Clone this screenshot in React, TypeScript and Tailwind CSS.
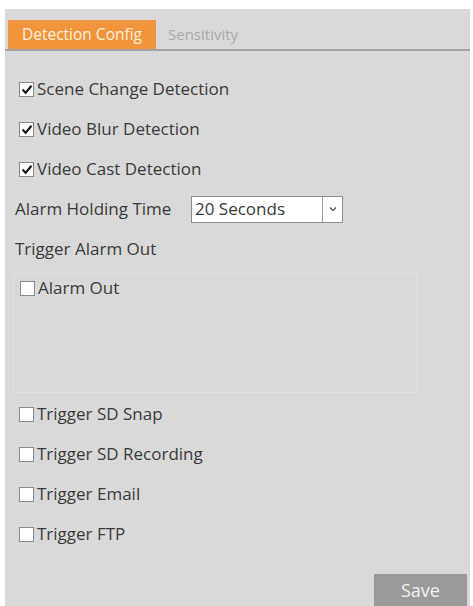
import React from "react";

function Box({ checked }: { checked?: boolean }) {
  return (
    <span className="w-[15px] h-[15px] bg-white border border-[#8a8a8a] flex items-center justify-center shrink-0">
      {checked && (
        <svg width="12" height="11" viewBox="0 0 12 11">
          <path d="M1.5 5.6 L4.6 8.8 L10.5 1.8" fill="none" stroke="#1e1e1e" strokeWidth="2.2" />
        </svg>
      )}
    </span>
  );
}

function CheckRow({ label, checked }: { label: string; checked?: boolean }) {
  return (
    <div className="h-[40px] flex items-center pl-[14px] gap-[3px]">
      <Box checked={checked} />
      <span>{label}</span>
    </div>
  );
}

export default function App() {
  return (
    <div
      className="bg-white w-[473px] h-[606px] pt-[9px] pl-[5px] overflow-hidden text-[17px] text-[#3a3a3a]"
      style={{ fontFamily: '"Open Sans", "Liberation Sans", sans-serif' }}
    >
      <div className="w-[465px] h-[597px] bg-[#d9d9d9] flex flex-col">
        <div className="pt-[11px] pl-[3px] flex items-end border-b-2 border-[#a3a3a3]">
          <div className="h-[29px] w-[148px] bg-[#f0953c] text-[#fdeede] text-[15.5px] flex items-center justify-center">
            Detection Config
          </div>
          <div className="h-[29px] px-[12px] text-[#a9a9a9] text-[15px] flex items-center">
            Sensitivity
          </div>
        </div>
        <div className="mt-[18px]">
          <CheckRow label="Scene Change Detection" checked />
          <CheckRow label="Video Blur Detection" checked />
          <CheckRow label="Video Cast Detection" checked />
          <div className="h-[40px] flex items-center pl-[10px]">
            <span className="w-[176px]">Alarm Holding Time</span>
            <div className="w-[152px] h-[27px] bg-white border border-[#8e8e8e] flex items-center">
              <span className="flex-1 pl-[3px]">20 Seconds</span>
              <span className="w-[20px] h-full border-l border-[#a0a0a0] flex items-center justify-center">
                <svg width="8" height="6" viewBox="0 0 8 6">
                  <path d="M1 1.5 L4 4.5 L7 1.5" fill="none" stroke="#666" strokeWidth="1.5" />
                </svg>
              </span>
            </div>
          </div>
          <div className="h-[40px] flex items-center pl-[10px]">Trigger Alarm Out</div>
          <div className="ml-[8px] mt-[4px] w-[404px] h-[120px] border border-[#e0e0e0] pt-[6px] pl-[6px]">
            <div className="flex items-center gap-[3px] h-[16px]">
              <Box />
              <span>Alarm Out</span>
            </div>
          </div>
          <div className="h-[1px]" />
          <CheckRow label="Trigger SD Snap" />
          <CheckRow label="Trigger SD Recording" />
          <CheckRow label="Trigger Email" />
          <CheckRow label="Trigger FTP" />
        </div>
        <div className="flex-1 flex items-end justify-end pr-[3px]">
          <div className="w-[93px] h-[32px] bg-[#999999] text-[#f2f2f2] text-[18px] flex items-center justify-center">
            Save
          </div>
        </div>
      </div>
    </div>
  );
}
